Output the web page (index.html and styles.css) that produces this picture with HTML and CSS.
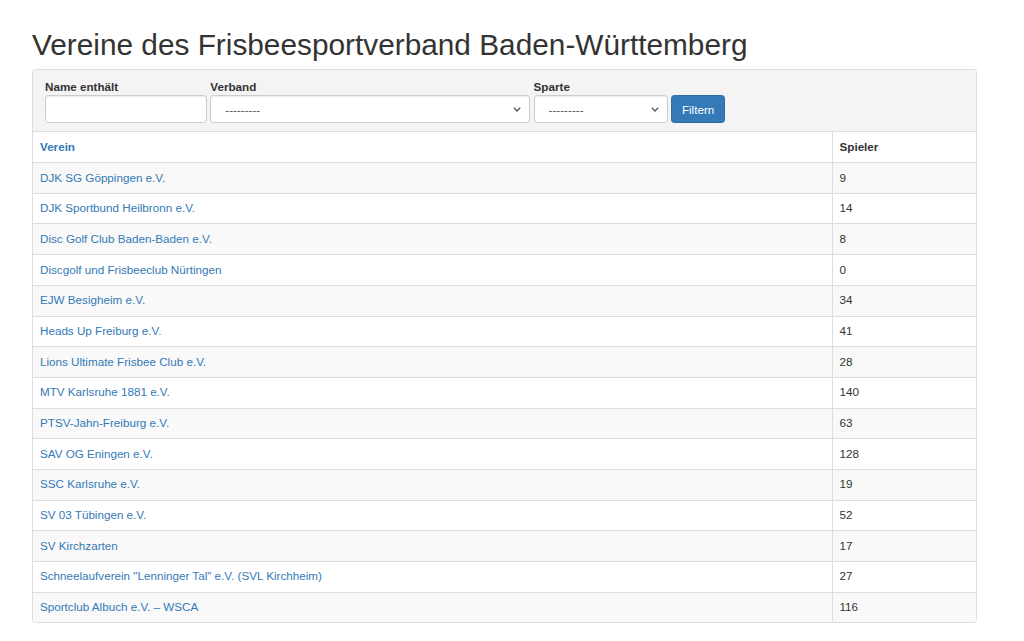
FILE: index.html
```
<!DOCTYPE html>
<html lang="de">
	<head>
		<meta charset="utf-8">
		<title>Vereine des Frisbeesportverband Baden-Württemberg</title>
		<link rel="stylesheet" href="styles.css">
	</head>
	<body>
		<div class="container">
			<h1 class="page_title">Vereine des Frisbeesportverband Baden-Württemberg</h1>

			<div class="panel">
				<form class="panel_heading">
					<div class="field field_name">
						<label for="name">Name enthält</label>
						<input id="name" class="control" type="text">
					</div>
					<div class="field field_verband">
						<label for="verband">Verband</label>
						<div class="select_wrap">
							<select id="verband" class="control">
								<option>---------</option>
							</select>
							<svg class="chevron" width="8" height="5" viewBox="0 0 8 5"><path d="M0.8 0.8 L4 4 L7.2 0.8" fill="none" stroke="#555" stroke-width="1.3"/></svg>
						</div>
					</div>
					<div class="field field_sparte">
						<label for="sparte">Sparte</label>
						<div class="select_wrap">
							<select id="sparte" class="control">
								<option>---------</option>
							</select>
							<svg class="chevron" width="8" height="5" viewBox="0 0 8 5"><path d="M0.8 0.8 L4 4 L7.2 0.8" fill="none" stroke="#555" stroke-width="1.3"/></svg>
						</div>
					</div>
					<button class="btn" type="button">Filtern</button>
				</form>

				<table class="clubs">
					<thead>
						<tr>
							<th><a href="#">Verein</a></th>
							<th class="col_players">Spieler</th>
						</tr>
					</thead>
					<tbody>
						<tr><td><a href="#">DJK SG Göppingen e.V.</a></td><td>9</td></tr>
						<tr><td><a href="#">DJK Sportbund Heilbronn e.V.</a></td><td>14</td></tr>
						<tr><td><a href="#">Disc Golf Club Baden-Baden e.V.</a></td><td>8</td></tr>
						<tr><td><a href="#">Discgolf und Frisbeeclub Nürtingen</a></td><td>0</td></tr>
						<tr><td><a href="#">EJW Besigheim e.V.</a></td><td>34</td></tr>
						<tr><td><a href="#">Heads Up Freiburg e.V.</a></td><td>41</td></tr>
						<tr><td><a href="#">Lions Ultimate Frisbee Club e.V.</a></td><td>28</td></tr>
						<tr><td><a href="#">MTV Karlsruhe 1881 e.V.</a></td><td>140</td></tr>
						<tr><td><a href="#">PTSV-Jahn-Freiburg e.V.</a></td><td>63</td></tr>
						<tr><td><a href="#">SAV OG Eningen e.V.</a></td><td>128</td></tr>
						<tr><td><a href="#">SSC Karlsruhe e.V.</a></td><td>19</td></tr>
						<tr><td><a href="#">SV 03 Tübingen e.V.</a></td><td>52</td></tr>
						<tr><td><a href="#">SV Kirchzarten</a></td><td>17</td></tr>
						<tr><td><a href="#">Schneelaufverein "Lenninger Tal" e.V. (SVL Kirchheim)</a></td><td>27</td></tr>
						<tr><td><a href="#">Sportclub Albuch e.V. – WSCA</a></td><td>116</td></tr>
					</tbody>
				</table>
			</div>
		</div>
	</body>
</html>
```
FILE: styles.css
```
* {
	box-sizing:border-box;
}

body {
	margin:0px;
	background:#fff;

	color:#333;
	font-family:"Liberation Sans", Arial, Helvetica, sans-serif;
	font-size:11.67px;
	line-height:16.67px;
}

a {
	color:#337ab7;
	text-decoration:none;
}

.container {
	width:945px;
	margin-left:32px;
	padding-top:27.5px;
}

.page_title {
	margin:0px 0px 8.5px 0px;

	font-size:29.8px;
	font-weight:normal;
	line-height:33px;
}

.panel {
	border:1px solid #ddd;
	border-radius:3.3px;
	overflow:hidden;
}

/* filter row */
.panel_heading {
	display:flex;
	align-items:flex-end;
	gap:3.3px;

	margin:0px;
	padding:8.5px 12.5px 8px 12px;

	background:#f4f4f4;
	border-bottom:1px solid #ddd;
}
	.field label {
		display:block;
		margin-bottom:0px;

		font-weight:bold;
	}
	.field_name {
		width:162px;
	}
	.field_verband {
		width:320px;
	}
	.field_sparte {
		width:134px;
	}

.control {
	display:block;
	width:100%;
	height:28.3px;
	margin:0px;
	padding:4px 10px;

	background:#fff;
	border:1px solid #ccc;
	border-radius:3.3px;
	box-shadow:inset 0 1px 1px rgba(0,0,0,0.075);

	color:#555;
	font-family:inherit;
	font-size:11.67px;
}
select.control {
	padding-left:14px;
	appearance:none;
	-webkit-appearance:none;
}

.select_wrap {
	position:relative;
}
	.chevron {
		position:absolute;
		right:9px;
		top:12px;
		pointer-events:none;
	}

.btn {
	height:28.3px;
	padding:0px 10px;

	background:#337ab7;
	border:1px solid #2e6da4;
	border-radius:3.3px;

	color:#fff;
	font-family:inherit;
	font-size:11.67px;
}

/* table */
.clubs {
	width:100%;
	border-collapse:collapse;
}
	.clubs th,
	.clubs td {
		padding:6.5px 7px;
		border-top:1px solid #ddd;

		text-align:left;
		vertical-align:top;
	}
	.clubs thead th {
		border-top:0px;
		font-weight:bold;
	}
	.clubs tr > :first-child {
		border-right:1px solid #ddd;
	}
	.clubs .col_players {
		width:144px;
	}
	.clubs tbody tr:nth-child(odd) {
		background:#f9f9f9;
	}
```
